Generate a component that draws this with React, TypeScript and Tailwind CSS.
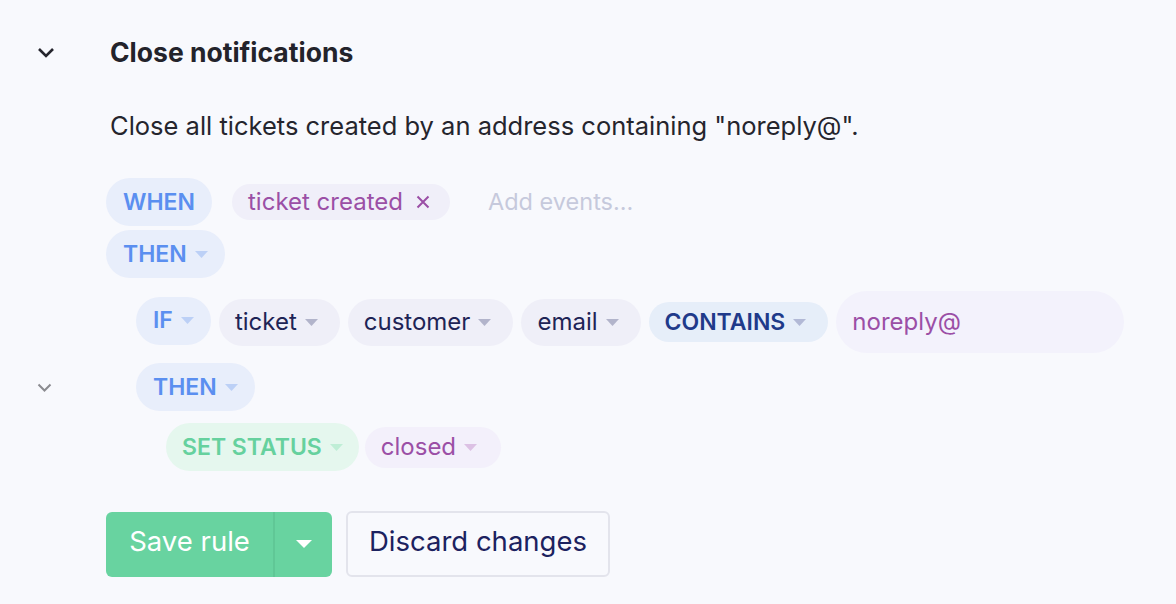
import React from 'react';

function Caret({ className }: { className: string }) {
  return (
    <svg width="13" height="7" viewBox="0 0 13 7" className={className}>
      <path d="M0 0 L13 0 L6.5 7 Z" fill="currentColor" />
    </svg>
  );
}

function Pill({
  children,
  className,
  caret,
}: {
  children: React.ReactNode;
  className: string;
  caret?: string;
}) {
  return (
    <div className={`flex items-center rounded-full ${className}`}>
      <span>{children}</span>
      {caret && <Caret className={`ml-[8px] ${caret}`} />}
    </div>
  );
}

export default function App() {
  const keyword = 'h-[48px] px-[17px] bg-[#e8eefb] text-[#5b8ff0] text-[23px] font-semibold';
  const field = 'h-[47px] pl-[16px] pr-[22px] bg-[#efeff8] text-[#1e2456]';

  return (
    <div className="min-h-[604px] w-[1176px] bg-[#f8f9fd] text-[24px] font-['Inter',sans-serif] text-[#25252d]">
      <div className="pt-[36px]">
        {/* header */}
        <div className="flex h-[32px] items-center">
          <div className="flex w-[110px] justify-start pl-[37px]">
            <svg width="18" height="11" viewBox="0 0 18 11">
              <path d="M2 2 L9 9 L16 2" fill="none" stroke="#25252d" strokeWidth="2.6" />
            </svg>
          </div>
          <h2 className="text-[26.5px] font-bold leading-[32px] text-[#23232b]">Close notifications</h2>
        </div>

        <p className="mt-[42px] pl-[110px] text-[25.5px] leading-[32px]">
          Close all tickets created by an address containing "noreply@".
        </p>

        {/* WHEN */}
        <div className="mt-[36px] flex items-center pl-[106px]">
          <Pill className={keyword}>WHEN</Pill>
          <div className="ml-[20px] flex h-[36px] items-center rounded-full bg-[#f0eff9] pl-[16px] pr-[20px] text-[#9b4fa6]">
            ticket created
            <svg width="14" height="14" viewBox="0 0 14 14" className="ml-[13px]">
              <path d="M1.5 1.5 L12.5 12.5 M12.5 1.5 L1.5 12.5" stroke="#9b4fa6" strokeWidth="2" />
            </svg>
          </div>
          <span className="ml-[38px] text-[23.5px] text-[#c6c9dc]">Add events...</span>
        </div>

        {/* THEN */}
        <div className="mt-[4px] flex items-center pl-[106px]">
          <Pill className={keyword} caret="text-[#bcd0f6]">THEN</Pill>
        </div>

        {/* IF row */}
        <div className="mt-[13px] flex items-center gap-[8px] pl-[136px]">
          <Pill className={`${keyword} -mt-[3px] h-[47px]`} caret="text-[#bcd0f6]">IF</Pill>
          <Pill className={field} caret="text-[#b2b4cb]">ticket</Pill>
          <Pill className={field} caret="text-[#b2b4cb]">customer</Pill>
          <Pill className={field} caret="text-[#b2b4cb]">email</Pill>
          <Pill className="h-[40px] pl-[16px] pr-[22px] bg-[#e6eef9] text-[23px] font-semibold text-[#1f3a8a]" caret="text-[#b2b9d6]">
            CONTAINS
          </Pill>
          <div className="flex h-[62px] w-[288px] items-center rounded-full bg-[#f3f2fc] px-[16px] text-[#9b4fa6]">
            noreply@
          </div>
        </div>

        {/* nested THEN */}
        <div className="mt-[10px] flex items-center">
          <div className="w-[136px] pl-[37px]">
            <svg width="15" height="9" viewBox="0 0 15 9">
              <path d="M1.5 1.5 L7.5 7.5 L13.5 1.5" fill="none" stroke="#8b8b90" strokeWidth="2" />
            </svg>
          </div>
          <Pill className={keyword} caret="text-[#bcd0f6]">THEN</Pill>
        </div>

        {/* SET STATUS */}
        <div className="mt-[12px] flex items-center gap-[6px] pl-[166px]">
          <Pill className="h-[48px] px-[16px] bg-[#e5f7ee] text-[23px] font-semibold text-[#66d19e]" caret="text-[#bfeed6]">
            SET STATUS
          </Pill>
          <Pill className="h-[41px] pl-[16px] pr-[24px] bg-[#f3f0fb] text-[#9b4fa6]" caret="text-[#dcc1e4]">
            closed
          </Pill>
        </div>

        {/* buttons */}
        <div className="mt-[40px] flex items-center gap-[14px] pl-[106px] text-[27.5px] leading-none">
          <div className="flex h-[65px] overflow-hidden rounded-[6px] bg-[#68d3a0] text-white">
            <button className="w-[167px] pb-[4px] text-center">Save rule</button>
            <button className="flex w-[59px] items-center justify-center border-l-2 border-[#60c796]">
              <svg width="16" height="8" viewBox="0 0 16 8">
                <path d="M0 0 L16 0 L8 8 Z" fill="#ffffff" />
              </svg>
            </button>
          </div>
          <button className="h-[66px] w-[264px] rounded-[6px] border-2 border-[#e3e4ec] bg-[#f8f9fd] pb-[4px] text-[#1c2260]">
            Discard changes
          </button>
        </div>
      </div>
    </div>
  );
}
